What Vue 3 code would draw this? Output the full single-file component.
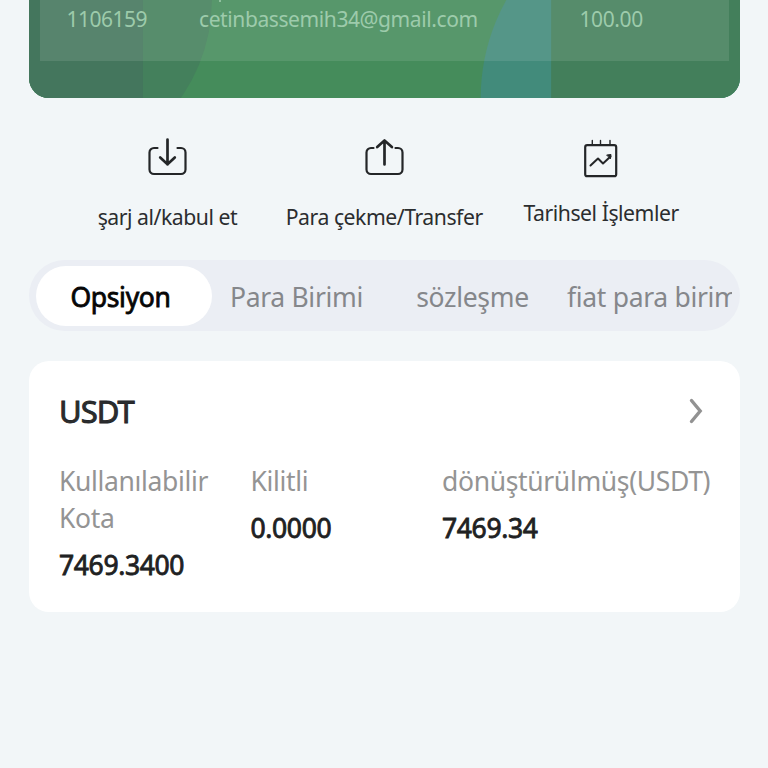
<script setup>
const transfer = { id: '1106159', email: 'cetinbassemih34@gmail.com', amount: '100.00' }
const tabs = ['Opsiyon', 'Para Birimi', 'sözleşme', 'fiat para birimi']
const balances = [
  { label: 'Kullanılabilir Kota', value: '7469.3400' },
  { label: 'Kilitli', value: '0.0000' },
  { label: 'dönüştürülmüş(USDT)', value: '7469.34' },
]
</script>

<template>
  <main class="page">
    <section class="banner">
      <svg class="banner-art" viewBox="29 0 711 98" preserveAspectRatio="none" aria-hidden="true">
        <rect x="29" width="711" height="98" fill="#458c5b" />
        <circle cx="42" cy="0" r="170" fill="#44805c" />
        <rect x="29" width="114" height="98" fill="#44765d" />
        <circle cx="681" cy="98" r="200" fill="#428b7b" />
        <rect x="551.5" width="189" height="98" fill="#437f5b" />
      </svg>
      <div class="feed">
        <span class="feed-id">{{ transfer.id }}</span>
        <span class="feed-email">{{ transfer.email }}</span>
        <span class="feed-amount">{{ transfer.amount }}</span>
      </div>
      <span class="descender"></span>
    </section>

    <nav class="actions">
      <a class="action">
        <svg class="icon" width="42" height="42" viewBox="0 0 42 42">
          <path d="M11.500 11H8A4.500 4.500 0 0 0 3.500 15.500v17A4.500 4.500 0 0 0 8 37h27a4.500 4.500 0 0 0 4.500-4.500v-17A4.500 4.500 0 0 0 35 11h-3.500" />
          <path class="arrow" d="M21.500 2.500v25M14.200 20.500l7.300 6.700 7.300-6.700" />
        </svg>
        <span>şarj al/kabul et</span>
      </a>
      <a class="action">
        <svg class="icon" width="42" height="42" viewBox="0 0 42 42">
          <path d="M10.500 11H8A4.500 4.500 0 0 0 3.500 15.500v17A4.500 4.500 0 0 0 8 37h27a4.500 4.500 0 0 0 4.500-4.500v-17A4.500 4.500 0 0 0 35 11h-2.500" />
          <path class="arrow" d="M21.500 27.500V3.500M14.200 10l7.300-6.500 7.400 6.500" />
        </svg>
        <span>Para çekme/Transfer</span>
      </a>
      <a class="action history">
        <svg class="icon" width="42" height="42" viewBox="0 0 42 42">
          <rect x="5.200" y="8.200" width="31" height="31" rx="2" />
          <path class="thin" d="M12.300 3.500v4.500M20.500 3.500v4.500M30 3.500v4.500" />
          <path class="trend" d="M10.500 28.500l7.500-7 5 5 7.500-7" />
          <path class="solid" d="M27 18l4-.5-.5 4z" />
        </svg>
        <span>Tarihsel İşlemler</span>
      </a>
    </nav>

    <div class="tabs">
      <div class="tab-strip">
        <button v-for="(tab, i) in tabs" :key="tab" class="tab" :class="['tab-' + i, { active: i === 0 }]">{{ tab }}</button>
      </div>
    </div>

    <section class="card">
      <header class="card-head">
        <h2>USDT</h2>
        <svg class="chevron" width="16" height="28" viewBox="0 0 16 28"><path d="M2.500 3.500l8.700 10.500-8.700 10.500" /></svg>
      </header>
      <div class="grid">
        <div v-for="b in balances" :key="b.label" class="cell">
          <div class="label">{{ b.label }}</div>
          <div class="value">{{ b.value }}</div>
        </div>
      </div>
    </section>
  </main>
</template>

<style>
body { margin: 0; background: #f2f6f8; }
</style>

<style scoped>
* { box-sizing: border-box; }
.page { width: 768px; height: 768px; overflow: hidden; padding: 0 28.500px 0 29px; background: #f2f6f8; font-family: "Noto Sans", sans-serif; color: #2b2d2f; }
.banner { position: relative; height: 98px; padding: 0 10.500px 0 11px; border-radius: 0 0 20px 20px; overflow: hidden; }
.banner-art { position: absolute; inset: 0; width: 100%; height: 100%; }
.feed { position: relative; display: grid; grid-template-columns: 132.500px 380.500px 1fr; height: 61px; padding: 4px 0 0 26.500px; background: rgba(255, 255, 255, .1); color: #9dcbab; font-size: 21px; letter-spacing: -.4px; line-height: 30px; white-space: nowrap; }
.feed-id { letter-spacing: -.5px; }
.descender { position: absolute; left: 190px; top: 0; width: 2px; height: 2px; background: #8fc09e; }
.actions { display: flex; height: 162px; padding: 39px 30px 0; }
.action { width: 217px; display: flex; flex-direction: column; align-items: center; font-size: 21.200px; letter-spacing: -.46px; line-height: 30px; white-space: nowrap; }
.action span { margin-top: 23px; }
.action.history span { margin-top: 19px; }
.icon { flex: none; fill: none; stroke: #242628; stroke-width: 2.200; stroke-linecap: round; stroke-linejoin: round; }
.icon .arrow { stroke-width: 2.700; }
.icon .thin { stroke-width: 1.400; }
.icon .trend { stroke-width: 2; }
.icon .solid { fill: #242628; stroke-width: 1; }
.tabs { height: 71px; padding: 6px 8px 5px 7px; border-radius: 36px; background: #ebeef4; }
.tab-strip { display: flex; height: 60px; overflow: hidden; }
.tab { flex: none; width: 176px; height: 60px; padding: 1px 7px 0 0; border: 0; border-radius: 30px; background: transparent; font: 400 26.500px/58px "Noto Sans", sans-serif; letter-spacing: -.32px; color: #85878b; white-space: nowrap; }
.tab.active { background: #fff; color: #060606; -webkit-text-stroke: .8px #060606; }
.tab-3 { width: 210px; padding: 1px 0 0 3px; text-align: left; }
.card { height: 251px; margin-top: 30px; padding: 28px 30px 0; border-radius: 20px; background: #fff; }
.card-head { display: flex; justify-content: space-between; height: 44px; }
h2 { margin: 0; font-size: 31px; font-weight: 400; line-height: 45px; -webkit-text-stroke: .9px #242628; letter-spacing: -1px; }
.chevron { margin: 8px 5px 0 0; fill: none; stroke: #929292; stroke-width: 3.400; stroke-linecap: round; stroke-linejoin: miter; }
.grid { display: grid; grid-template-columns: 191.500px 191.500px 1fr; margin-top: 30px; line-height: 37px; }
.label { font-size: 26.500px; letter-spacing: -.35px; color: #949494; }
.value { margin-top: 9.500px; font-size: 26.500px; letter-spacing: -.36px; color: #202122; -webkit-text-stroke: .8px #202122; }
</style>
